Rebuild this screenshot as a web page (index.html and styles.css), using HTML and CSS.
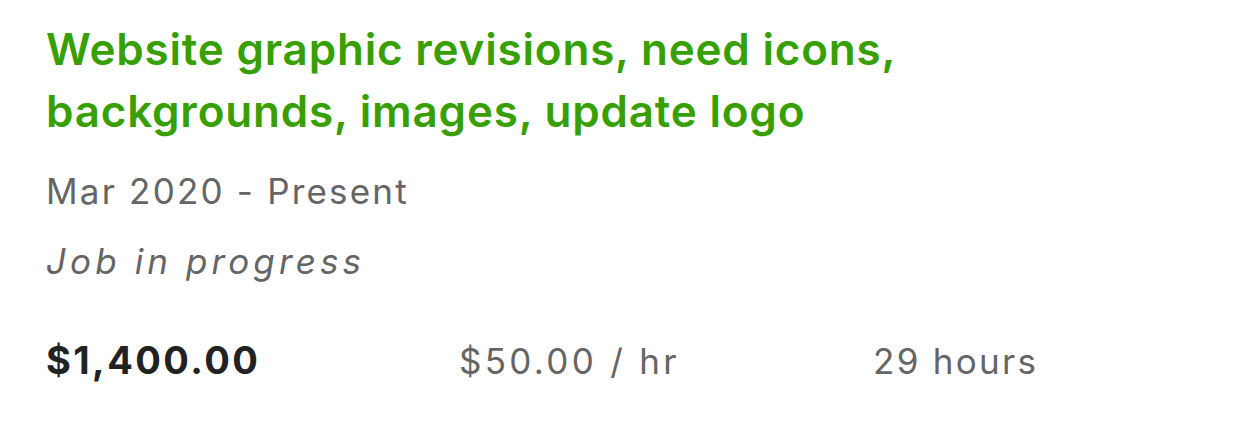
FILE: index.html
```html
<!DOCTYPE html>
<html lang="en">
<head>
  <meta charset="UTF-8" />
  <meta name="viewport" content="width=device-width, initial-scale=1.0"/>
  <title>Job details</title>
  <link rel="stylesheet" href="styles.css">
</head>
<body>
  <div class="job">
    <h2 class="job-title">Website graphic revisions, need icons, backgrounds, images, update logo</h2>
    <div class="job-dates">Mar 2020 - Present</div>
    <div class="job-status">Job in progress</div>

    <div class="job-stats">
      <div class="total">$1,400.00</div>
      <div class="rate">$50.00 / hr</div>
      <div class="hours">29 hours</div>
    </div>
  </div>
</body>
</html>
```
FILE: styles.css
```css
* {
  box-sizing: border-box;
}
body {
  font-family: Inter, 'Open Sans', sans-serif;
  background: #fff;
  margin: 0;
  padding: 0;
}
.job {
  padding: 18px 46px 0 46px;
}
.job-title {
  margin: 0;
  max-width: 880px;
  font-size: 44px;
  font-weight: 600;
  line-height: 62px;
  letter-spacing: 0.8px;
  color: #37a000;
}
.job-dates {
  margin-top: 27px;
  font-size: 35px;
  line-height: 44px;
  letter-spacing: 2.2px;
  color: #656565;
}
.job-status {
  margin-top: 26px;
  font-size: 35px;
  line-height: 44px;
  font-style: italic;
  letter-spacing: 4.1px;
  color: #656565;
}
.job-stats {
  display: grid;
  grid-template-columns: 413px 414px auto;
  align-items: baseline;
  margin-top: 52px;
  line-height: 50px;
}
.total {
  font-size: 38px;
  font-weight: 700;
  letter-spacing: 2.4px;
  color: #222;
}
.rate,
.hours {
  font-size: 35px;
  color: #656565;
}
.rate {
  letter-spacing: 3.3px;
}
.hours {
  letter-spacing: 2.3px;
}
```
